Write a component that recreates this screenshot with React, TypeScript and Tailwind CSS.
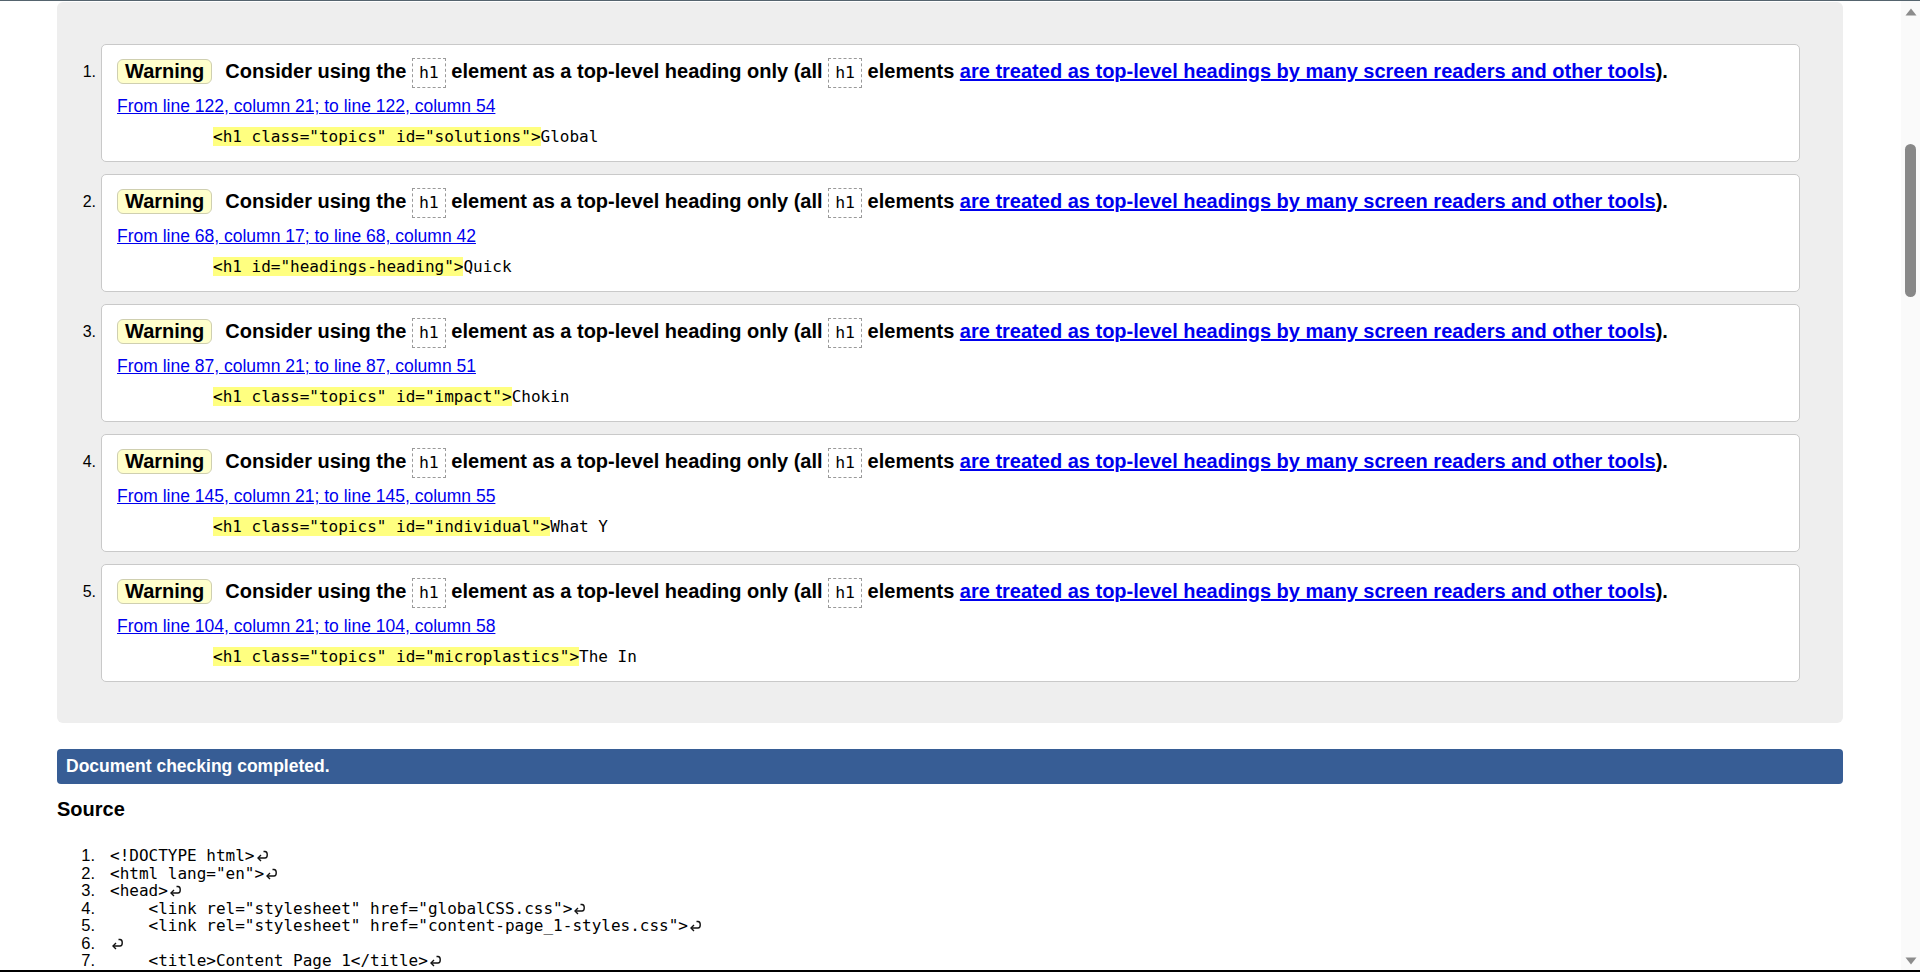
import React from 'react'

interface Message {
  loc: string
  code: string
  after: string
}

const MESSAGES: Message[] = [
  { loc: 'From line 122, column 21; to line 122, column 54', code: '<h1 class="topics" id="solutions">', after: 'Global' },
  { loc: 'From line 68, column 17; to line 68, column 42', code: '<h1 id="headings-heading">', after: 'Quick' },
  { loc: 'From line 87, column 21; to line 87, column 51', code: '<h1 class="topics" id="impact">', after: 'Chokin' },
  { loc: 'From line 145, column 21; to line 145, column 55', code: '<h1 class="topics" id="individual">', after: 'What Y' },
  { loc: 'From line 104, column 21; to line 104, column 58', code: '<h1 class="topics" id="microplastics">', after: 'The In' },
]

const SOURCE: string[] = [
  '<!DOCTYPE html>',
  '<html lang="en">',
  '<head>',
  '    <link rel="stylesheet" href="globalCSS.css">',
  '    <link rel="stylesheet" href="content-page_1-styles.css">',
  '',
  '    <title>Content Page 1</title>',
]

const mono = "font-['DejaVu_Sans_Mono',monospace]"

function H1Box() {
  return (
    <span className={`inline-block border border-dashed border-[#9a9a9a] px-[6px] leading-[28px] text-[16.5px] font-normal text-black ${mono}`}>
      h1
    </span>
  )
}

// the "↩" line-end marker
function ReturnMark() {
  return (
    <svg width="13" height="13" viewBox="0 0 13 13" className="ml-[1px] inline-block align-[-1px]">
      <path d="M7.5 2.5 H9 C12 2.5 12 9 9 9 H2" fill="none" stroke="#111" strokeWidth="1.4" />
      <path d="M5 6 L2 9 L5 12" fill="none" stroke="#111" strokeWidth="1.4" />
    </svg>
  )
}

function MessageCard({ msg, n }: { msg: Message; n: number }) {
  return (
    <li className="flex">
      {/* list marker */}
      <div className="w-[44px] shrink-0 pr-[5px] pt-[13px] text-right text-[16px] leading-[30px] text-black">
        {n}.
      </div>
      <div className="h-[118px] flex-1 rounded-[5px] border border-[#c9c9c9] bg-white pl-[15px] pt-[11px]">
        <p className="whitespace-nowrap text-[20px] font-bold leading-[30px] text-black">
          <span className="mr-[13px] inline-block rounded-[6px] border border-[#cfcfb0] bg-[#ffffcc] px-[7px] leading-[23px]">
            Warning
          </span>
          Consider using the <H1Box /> element as a top-level heading only (all <H1Box /> elements{' '}
          <a className="text-[#0000ee] underline">are treated as top-level headings by many screen readers and other tools</a>
          ).
        </p>
        <p className="mt-[7px] text-[17.5px] leading-[22px]">
          <a className="text-[#0000ee] underline">{msg.loc}</a>
        </p>
        <p className={`mt-[8px] whitespace-pre pl-[96px] text-[16px] leading-[24px] text-black ${mono}`}>
          <span className="bg-[#ffff80]">{msg.code}</span>
          {msg.after}
        </p>
      </div>
    </li>
  )
}

function Scrollbar() {
  return (
    <div className="flex w-[19px] shrink-0 flex-col items-center bg-[#fafafa] pt-[7px] pb-[5px]">
      <svg width="12" height="8" viewBox="0 0 12 8">
        <path d="M6 0.5 L11.5 7.5 L0.5 7.5 Z" fill="#8c8c8c" />
      </svg>
      <div className="mt-[128px] h-[153px] w-[11px] rounded-full bg-[#888888]" />
      <div className="flex-1" />
      <svg width="12" height="8" viewBox="0 0 12 8">
        <path d="M0.5 0.5 L11.5 0.5 L6 7.5 Z" fill="#8c8c8c" />
      </svg>
    </div>
  )
}

export default function App() {
  return (
    <div className="flex h-[972px] w-[1920px] flex-col overflow-hidden bg-white font-['Liberation_Sans',Arial,sans-serif] text-black">
      <div className="h-px shrink-0 bg-[#55646e]" />
      <div className="flex min-h-0 flex-1">
        <main className="min-w-0 flex-1 overflow-hidden pl-[57px] pr-[58px]">
          {/* messages panel */}
          <section className="mt-[1px] rounded-[6px] bg-[#eeeeee] pt-[42px] pb-[41px] pr-[43px]">
            <ol className="flex flex-col gap-[12px]">
              {MESSAGES.map((m, i) => (
                <MessageCard key={i} msg={m} n={i + 1} />
              ))}
            </ol>
          </section>

          <div className="mt-[26px] h-[35px] rounded-[4px] bg-[#375d95] pl-[9px] text-[17.5px] font-bold leading-[35px] text-white">
            Document checking completed.
          </div>

          <h2 className="mt-[13px] text-[20px] font-bold leading-[24px]">Source</h2>

          <ol className="mt-[26px]">
            {SOURCE.map((line, i) => (
              <li key={i} className="flex items-baseline">
                <span className="w-[38px] shrink-0 text-right text-[16.5px] leading-[17.5px]">{i + 1}.</span>
                <span className={`ml-[15px] whitespace-pre text-[16px] leading-[17.5px] ${mono}`}>
                  {line}
                  <ReturnMark />
                </span>
              </li>
            ))}
          </ol>
        </main>
        <Scrollbar />
      </div>
      <div className="h-[2px] shrink-0 bg-black" />
    </div>
  )
}
